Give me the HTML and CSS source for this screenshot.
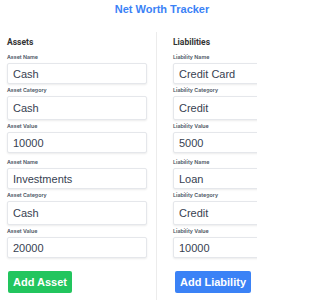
FILE: index.html
```
<!DOCTYPE html>
<html>
<head>
<meta charset="utf-8">
<link rel="stylesheet" href="styles.css">
</head>
<body>
<div class="frame">
<div class="app">
  <h1 class="title">Net Worth Tracker</h1>
  <div class="columns">
    <section class="col col-left">
      <h2 class="col-title">Assets</h2>
      <div class="group">
        <label class="field"><span class="lbl">Asset Name</span><input class="inp" value="Cash"></label>
        <label class="field"><span class="lbl">Asset Category</span><input class="inp inp-tall" value="Cash"></label>
        <label class="field"><span class="lbl">Asset Value</span><input class="inp" value="10000"></label>
      </div>
      <div class="group">
        <label class="field"><span class="lbl">Asset Name</span><input class="inp" value="Investments"></label>
        <label class="field"><span class="lbl">Asset Category</span><input class="inp inp-tall" value="Cash"></label>
        <label class="field"><span class="lbl">Asset Value</span><input class="inp" value="20000"></label>
      </div>
      <button class="btn btn-green">Add Asset</button>
    </section>
    <section class="col col-right">
      <h2 class="col-title">Liabilities</h2>
      <div class="group">
        <label class="field"><span class="lbl">Liability Name</span><input class="inp" value="Credit Card"></label>
        <label class="field"><span class="lbl">Liability Category</span><input class="inp inp-tall" value="Credit"></label>
        <label class="field"><span class="lbl">Liability Value</span><input class="inp" value="5000"></label>
      </div>
      <div class="group">
        <label class="field"><span class="lbl">Liability Name</span><input class="inp" value="Loan"></label>
        <label class="field"><span class="lbl">Liability Category</span><input class="inp inp-tall" value="Credit"></label>
        <label class="field"><span class="lbl">Liability Value</span><input class="inp" value="10000"></label>
      </div>
      <button class="btn btn-blue">Add Liability</button>
    </section>
  </div>
</div>
</div>
</body>
</html>
```
FILE: styles.css
```
html, body {
  margin: 0;
  padding: 0;
  background: #ffffff;
  overflow: hidden;
}
body {
  font-family: "Liberation Sans", Arial, sans-serif;
  color: #374151;
}
.frame {
  width: 257px;
  height: 300px;
  overflow: hidden;
}
.app {
  width: 324px;
}
.title {
  margin: 0;
  padding-top: 2px;
  height: 30px;
  box-sizing: border-box;
  text-align: center;
  font-size: 11px;
  line-height: 14px;
  font-weight: bold;
  color: #3b82f6;
}
.columns {
  display: grid;
  grid-template-columns: 157px 1fr;
  padding-top: 2px;
}
.col {
  display: flex;
  flex-direction: column;
  align-items: flex-start;
  padding-top: 4px;
  padding-bottom: 10px;
}
.col-left {
  padding-left: 7px;
  border-right: 1px solid #ececec;
}
.col-right {
  padding-left: 16px;
}
.col-title {
  margin: 0 0 5px 0;
  font-family: Roboto, "Liberation Sans", sans-serif;
  font-size: 8.5px;
  line-height: 12px;
  font-weight: bold;
  color: #333333;
}
.group {
  display: flex;
  flex-direction: column;
  margin-bottom: 3px;
}
.field {
  display: flex;
  flex-direction: column;
  margin-bottom: 2px;
}
.lbl {
  font-family: Inter, "Liberation Sans", sans-serif;
  font-size: 5.3px;
  line-height: 8px;
  font-weight: 600;
  color: #4b5563;
  margin-bottom: 2px;
}
.inp {
  width: 140px;
  height: 21px;
  box-sizing: border-box;
  margin: 0;
  padding: 0 5px;
  border: 1px solid #e5e7eb;
  border-radius: 2px;
  box-shadow: 0 1px 2px rgba(0, 0, 0, 0.08);
  font-family: "Liberation Sans", Arial, sans-serif;
  font-size: 11px;
  color: #374151;
  background: #ffffff;
  outline: none;
}
.inp-tall {
  height: 24px;
}
.btn {
  margin-top: 8px;
  height: 22px;
  padding: 0 5px;
  border: none;
  border-radius: 2px;
  font-family: "Liberation Sans", Arial, sans-serif;
  font-size: 11px;
  font-weight: bold;
  color: #ffffff;
  cursor: pointer;
}
.btn-green {
  margin-left: 1px;
  background: #22c55e;
}
.btn-blue {
  margin-left: 2px;
  background: #3b82f6;
}
```
